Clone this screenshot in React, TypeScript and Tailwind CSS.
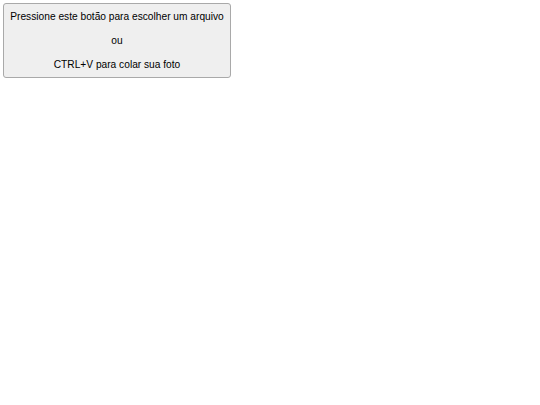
export default function App() {
  return (
    <div className="p-[3px] bg-white min-h-screen">
      <button
        type="button"
        className="block bg-[#efefef] border border-[#a9a9a9] rounded-[3px] px-[6px] pt-[1px] font-['Liberation_Sans',Arial,sans-serif] text-[10.2px] leading-[24px] text-black text-center w-[228px] whitespace-nowrap"
      >
        <span className="block">Pressione este botão para escolher um arquivo</span>
        <span className="block">ou</span>
        <span className="block">CTRL+V para colar sua foto</span>
      </button>
    </div>
  );
}
